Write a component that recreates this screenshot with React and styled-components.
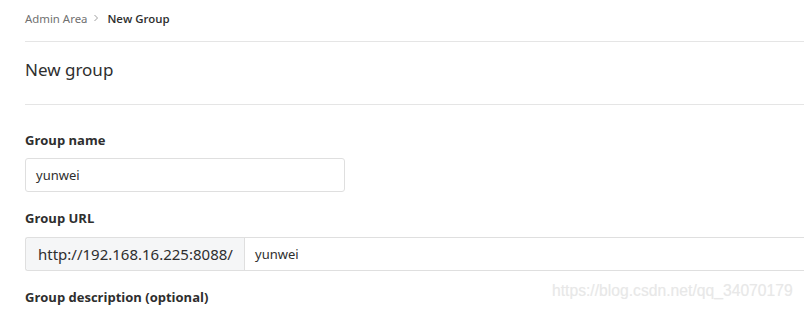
import React from "react";
import styled, { createGlobalStyle } from "styled-components";

const Global = createGlobalStyle`
  html, body { margin: 0; padding: 0; background: #fff; }
  body { font-family: "Noto Sans", "Open Sans", "Liberation Sans", sans-serif; color: #2e2e2e; overflow: hidden; }
`;

const Page = styled.div`
  position: relative;
  width: 804px;
  height: 310px;
  padding-left: 25px;
  box-sizing: border-box;
  overflow: hidden;
`;

const Breadcrumb = styled.nav`
  display: flex;
  align-items: center;
  height: 36px;
  padding-bottom: 5px;
  border-bottom: 1px solid #e5e5e5;
  font-size: 11.4px;
`;

const Crumb = styled.span`
  color: ${(p) => (p.$current ? "#2e2e2e" : "#707070")};
  font-weight: ${(p) => (p.$current ? 600 : 400)};
  font-family: ${(p) => (p.$current ? '"Open Sans", "Noto Sans", sans-serif' : "inherit")};
`;

const Chevron = styled.svg`
  width: 6px;
  height: 8px;
  margin: 0 8px 0 6px;
  color: #a0a0a0;
`;

const TitleBar = styled.div`
  padding: 14px 0 20px;
  border-bottom: 1px solid #e5e5e5;
`;

const Title = styled.h3`
  margin: 0;
  font-size: 17px;
  line-height: 28px;
  font-weight: 400;
  color: #2e2e2e;
`;

const Form = styled.form`
  padding-top: 25px;
  display: flex;
  flex-direction: column;
`;

const Field = styled.div`
  display: flex;
  flex-direction: column;
  gap: 8px;
  margin-bottom: 16px;
`;

const Label = styled.label`
  font-family: "Open Sans", "Noto Sans", sans-serif;
  font-size: 13px;
  line-height: 20px;
  font-weight: 700;
  color: #2e2e2e;
`;

const TextInput = styled.div`
  width: 320px;
  height: 34px;
  box-sizing: border-box;
  border: 1px solid #dfdfdf;
  border-radius: 3px;
  padding: 0 10px;
  display: flex;
  align-items: center;
  font-size: 13px;
  color: #2e2e2e;
`;

const InputGroup = styled.div`
  display: flex;
  height: 34px;
  margin-top: 1px;
  box-sizing: border-box;
  border: 1px solid #dfdfdf;
  border-right: none;
  border-radius: 3px 0 0 3px;
  margin-right: -10px;
`;

const Prefix = styled.div`
  width: 219px;
  box-sizing: border-box;
  display: flex;
  align-items: center;
  padding-left: 12px;
  background: #f5f6f7;
  border-right: 1px solid #dfdfdf;
  border-radius: 3px 0 0 3px;
  font-size: 15px;
  color: #2e2e2e;
`;

const GroupValue = styled.div`
  flex: 1;
  display: flex;
  align-items: center;
  padding-left: 10px;
  font-size: 13px;
`;

const Watermark = styled.div`
  position: absolute;
  left: 552px;
  top: 282px;
  font-family: "Liberation Sans", Arial, sans-serif;
  font-size: 15.7px;
  color: #e8e8e8;
  text-shadow: 0 0 1px #f4f4f4;
  white-space: nowrap;
`;

export default function App() {
  return (
    <>
      <Global />
      <Page>
        <Breadcrumb>
          <Crumb>Admin Area</Crumb>
          <Chevron viewBox="0 0 6 8" fill="none" stroke="currentColor" strokeWidth="1">
            <path d="M1.5 1 L4.5 4 L1.5 7" />
          </Chevron>
          <Crumb $current>New Group</Crumb>
        </Breadcrumb>
        <TitleBar>
          <Title>New group</Title>
        </TitleBar>
        <Form>
          <Field>
            <Label>Group name</Label>
            <TextInput>yunwei</TextInput>
          </Field>
          <Field>
            <Label>Group URL</Label>
            <InputGroup>
              <Prefix>http://192.168.16.225:8088/</Prefix>
              <GroupValue>yunwei</GroupValue>
            </InputGroup>
          </Field>
          <Field>
            <Label>Group description (optional)</Label>
          </Field>
        </Form>
        <Watermark>https://blog.csdn.net/qq_34070179</Watermark>
      </Page>
    </>
  );
}
